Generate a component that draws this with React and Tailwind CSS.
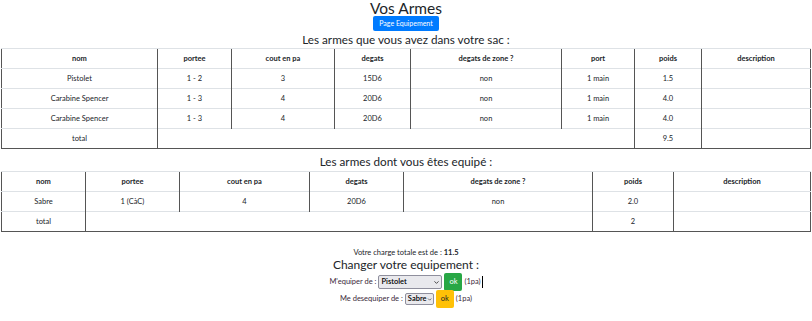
import React from 'react';
import { ChevronDown } from 'lucide-react';

const sacCols = [
  { label: 'nom', w: 'w-[156px]' },
  { label: 'portee', w: 'w-[74px]' },
  { label: 'cout en pa', w: 'w-[103px]' },
  { label: 'degats', w: 'w-[76px]' },
  { label: 'degats de zone ?', w: 'w-[151px]' },
  { label: 'port', w: 'w-[73px]' },
  { label: 'poids', w: 'w-[67px]' },
  { label: 'description', w: '' },
];

const sacRows = [
  ['Pistolet', '1 - 2', '3', '15D6', 'non', '1 main', '1.5', ''],
  ['Carabine Spencer', '1 - 3', '4', '20D6', 'non', '1 main', '4.0', ''],
  ['Carabine Spencer', '1 - 3', '4', '20D6', 'non', '1 main', '4.0', ''],
];

const equipCols = [
  { label: 'nom', w: 'w-[84px]' },
  { label: 'portee', w: 'w-[94px]' },
  { label: 'cout en pa', w: 'w-[130px]' },
  { label: 'degats', w: 'w-[94px]' },
  { label: 'degats de zone ?', w: 'w-[189px]' },
  { label: 'poids', w: 'w-[81px]' },
  { label: 'description', w: '' },
];

const equipRows = [['Sabre', '1 (CàC)', '4', '20D6', 'non', '2.0', '']];

const cell = 'h-[20px] p-0 text-center align-middle border-t border-[#dee2e6] border-l border-l-[#555] first:border-l-0';

const ArmesTable = ({ cols, rows, totalSpan, total }) => (
  <table className="w-full table-fixed border-collapse border-x border-b border-x-[#555] border-b-[#555]">
    <thead>
      <tr>
        {cols.map((c) => (
          <th key={c.label} className={`${cell} ${c.w} font-bold`}>
            {c.label}
          </th>
        ))}
      </tr>
    </thead>
    <tbody>
      {rows.map((r, i) => (
        <tr key={i}>
          {r.map((v, j) => (
            <td key={j} className={cell}>
              {v}
            </td>
          ))}
        </tr>
      ))}
      <tr>
        <td className={cell}>total</td>
        <td className={cell} colSpan={totalSpan}></td>
        <td className={cell}>{total}</td>
        <td className={cell}></td>
      </tr>
    </tbody>
  </table>
);

// looks like the browser's native select
const FakeSelect = ({ value, className }) => (
  <div
    className={`flex items-center justify-between border border-[#8f8f9d] rounded-[2px] bg-[#e9e9ed] text-black text-[7.5px] font-semibold pl-[2px] pr-[1px] ${className}`}
  >
    <span className="leading-none">{value}</span>
    <ChevronDown className="w-[7px] h-[7px] text-[#333]" strokeWidth={3} />
  </div>
);

const App = () => {
  return (
    <div
      className="w-[812px] h-[321px] bg-white text-[#212529] text-[7.5px] px-px"
      style={{ fontFamily: 'Lato, sans-serif' }}
    >
      <div className="flex flex-col items-center">
        <h1 className="text-[15.5px] leading-[16px] font-normal">Vos Armes</h1>
        <button className="h-[15px] px-[6px] rounded-[2px] bg-[#007bff] text-white text-[7px] leading-none">
          Page Equipement
        </button>
        <h2 className="text-[11.7px] leading-[17px] font-normal">Les armes que vous avez dans votre sac :</h2>
      </div>

      <ArmesTable cols={sacCols} rows={sacRows} totalSpan={5} total="9.5" />

      <h2 className="mt-[3px] text-center text-[11.7px] leading-[19px] font-normal">Les armes dont vous êtes equipé :</h2>

      <ArmesTable cols={equipCols} rows={equipRows} totalSpan={4} total="2" />

      <div className="mt-[16px] flex flex-col items-center">
        <p className="text-[7.5px] leading-[10px]">
          Votre charge totale est de : <b>11.5</b>
        </p>
        <h3 className="text-[12px] leading-[14px] font-normal">Changer votre equipement :</h3>
        <div className="mt-[1px] flex items-center gap-[2px] text-[#3b2a3a]">
          <span>M'equiper de :</span>
          <FakeSelect value="Pistolet" className="w-[64px] h-[14px]" />
          <button className="w-[18px] h-[18px] rounded-[2px] bg-[#28a745] text-white text-[7.5px]">ok</button>
          <span className="border-r border-black pr-px">(1pa)</span>
        </div>
        <div className="mt-[-1px] flex items-center gap-[2px] text-[#3b2a3a]">
          <span>Me desequiper de :</span>
          <FakeSelect value="Sabre" className="w-[29px] h-[12px]" />
          <button className="w-[18px] h-[18px] rounded-[2px] bg-[#ffc107] text-[#212529] text-[7.5px]">ok</button>
          <span>(1pa)</span>
        </div>
      </div>
    </div>
  );
};

export default App;
